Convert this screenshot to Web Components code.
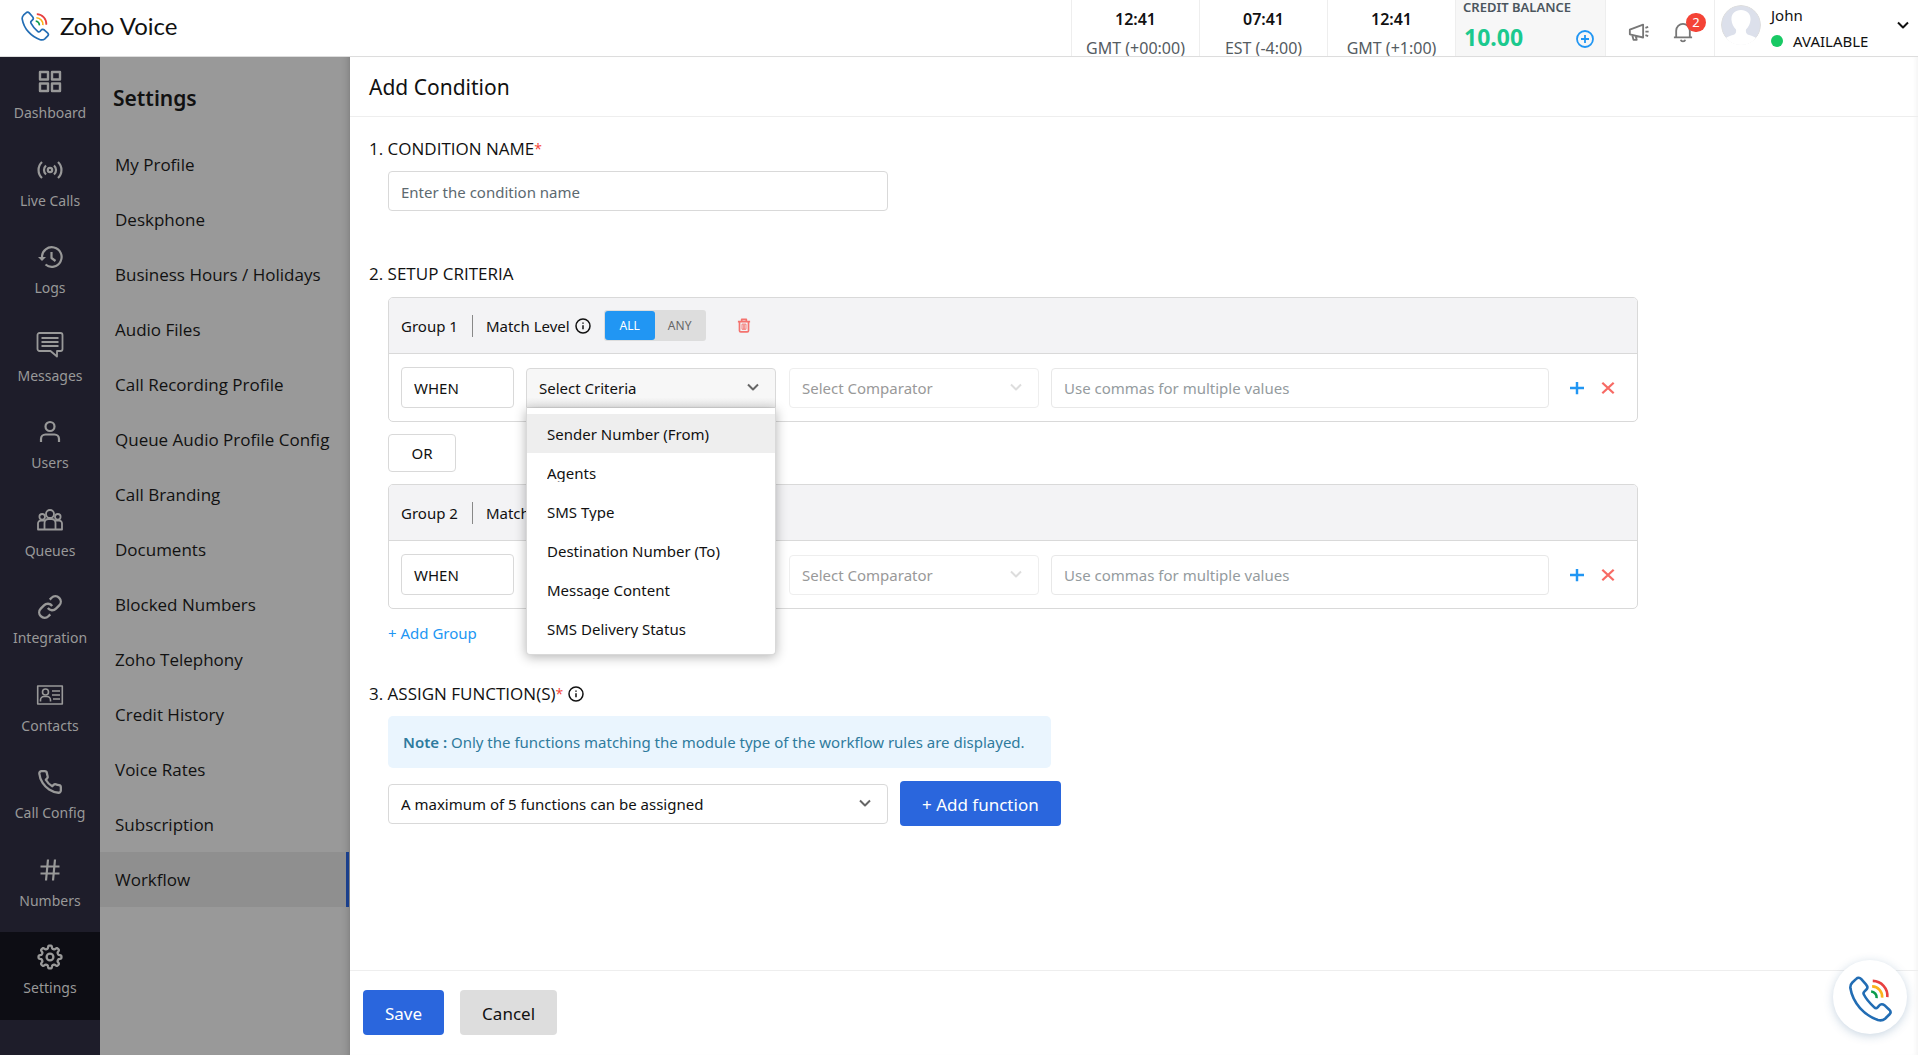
<!DOCTYPE html>
<html lang="en">
<head>
<meta charset="utf-8">
<title>Zoho Voice - Add Condition</title>
<style>
  html, body { height: 100%; margin: 0; }
  body { background: #fff; color: #111; font: 14px/20px "Noto Sans", "Open Sans", sans-serif; overflow: hidden; }
</style>
</head>
<body>
<zv-app></zv-app>
<script>
/* Base class: renders the static css/html of each element into an open shadow root. */
class ZvElement extends HTMLElement {
  connectedCallback() {
    if (this.shadowRoot) return;
    const t = document.createElement('template');
    t.innerHTML = `<style>*{box-sizing:border-box}${this.constructor.css || ''}</style>${this.render()}`;
    this.attachShadow({ mode: 'open' }).append(t.content.cloneNode(true));
  }
}

/* Outline of the gear: a circle whose radius swings between tooth and gap. */
const gear = (() => {
  let d = '';
  for (let i = 0; i < 160; i++) {
    const a = i / 160 * Math.PI * 2;
    const r = 10 + 1.5 * Math.tanh(2.2 * Math.cos(8 * a)) ;
    d += (i ? 'L' : 'M') + (13 + r * Math.sin(a)).toFixed(2) + ' ' + (13 - r * Math.cos(a)).toFixed(2);
  }
  return d + 'Z';
})();

const ICONS = {
  dashboard: ['0 0 26 26', 2.4, '<path d="M3 3h8v7.500H3zM15 3h8v7.500h-8zM3 14.500h8V22H3zM15 14.500h8V22h-8z"/>'],
  live: ['0 0 26 26', 2.2, '<circle cx="13" cy="13" r="2.200"/><path d="M9 17.500a6 6 0 0 1 0-9M17 17.500a6 6 0 0 0 0-9M5 21a11 11 0 0 1 0-16M21 21a11 11 0 0 0 0-16"/>'],
  logs: ['0 0 26 26', 2.2, '<path d="M5 13a9.800 9.800 0 1 1 3.500 7.500"/><path d="M1 13h8l-4 4z" fill="currentColor" stroke="none"/><path d="M14.500 8v6l4 3"/>'],
  messages: ['0 0 26 26', 1.8, '<path d="M2.500 1h21a2 2 0 0 1 2 2v14a2 2 0 0 1-2 2H20v5.500l-6.500-5.500h-11a2 2 0 0 1-2-2v-14a2 2 0 0 1 2-2z"/><path d="M4.500 6h17M4.500 10h17M4.500 14h17"/>'],
  users: ['0 0 26 26', 2.2, '<circle cx="13" cy="7.500" r="4.500"/><path d="M4 23v-3a4.500 4.500 0 0 1 4.500-4.500h9a4.500 4.500 0 0 1 4.500 4.500v3"/>'],
  queues: ['0 0 26 26', 1.8, '<circle cx="13" cy="7" r="4"/><circle cx="5.200" cy="9.800" r="2.800"/><circle cx="20.800" cy="9.800" r="2.800"/><path d="M7.500 22.500V16a4 4 0 0 1 4-4h3a4 4 0 0 1 4 4v6.500zM7.500 22.500H1v-6a3 3 0 0 1 3-3h3.500M18.500 22.500H25v-6a3 3 0 0 0-3-3h-3.500"/>'],
  integration: ['0 0 24 24', 2.2, '<path d="M10 13a5 5 0 0 0 7.540.540l3-3a5 5 0 0 0-7.070-7.070l-1.720 1.710M14 11a5 5 0 0 0-7.540-.540l-3 3a5 5 0 0 0 7.070 7.070l1.710-1.710"/>'],
  contacts: ['0 0 26 26', 1.6, '<path d="M.7 4h24.600v18H.7z"/><circle cx="8.500" cy="10" r="3"/><path d="M3.500 19.500V18a3.500 3.500 0 0 1 3.500-3.500h3a3.500 3.500 0 0 1 3.500 3.500v1.500M15 9h8M15 13h8M16 17h7"/>'],
  phone: ['0 0 24 24', 2.1, '<path d="M22 16.920v3a2 2 0 0 1-2.180 2 19.790 19.790 0 0 1-8.630-3.070 19.500 19.500 0 0 1-6-6A19.790 19.790 0 0 1 2.120 4.180 2 2 0 0 1 4.110 2h3a2 2 0 0 1 2 1.720c.127.960.361 1.903.7 2.810a2 2 0 0 1-.45 2.110L8.090 9.910a16 16 0 0 0 6 6l1.270-1.270a2 2 0 0 1 2.110-.45c.907.339 1.850.573 2.810.7A2 2 0 0 1 22 16.920z"/>'],
  hash: ['0 0 26 26', 2.2, '<path d="M3.500 9.500h19M3.500 16.500h19M11 2.500l-2 21M18 2.500l-2 21"/>'],
  gear: ['0 0 26 26', 2.3, `<path d="${gear}"/><circle cx="13" cy="13" r="3.400"/>`],
  chevron: ['0 0 14 14', 2, '<path d="M2 4.500l5 5 5-5"/>'],
  info: ['0 0 16 16', 1.5, '<circle cx="8" cy="8" r="7"/><path d="M8 7.200v4M8 4.500v1.300"/>'],
  trash: ['0 0 14 16', 1.8, '<path d="M.5 3.800h13M2.200 4v9.500a1.300 1.300 0 0 0 1.300 1.300h7a1.300 1.300 0 0 0 1.300-1.300V4M4.500 3.500v-2h5v2"/><path d="M4.900 6.500h4.200v5.500H4.900z" stroke-width="1"/><path d="M7 7v5" stroke-width="1.500"/>'],
  plus: ['0 0 16 16', 2.8, '<path d="M0 8h16M8 1v14"/>'],
  cross: ['0 0 16 16', 2.6, '<path d="M1.500 2l13 12M14.500 2l-13 12"/>'],
  circleplus: ['0 0 18 18', 1.8, '<circle cx="9" cy="9" r="8"/><path d="M5 9h8M9 5v8"/>'],
  megaphone: ['0 0 24 20', 2, '<path d="M2 7.500L16.500 2v14L2 12.500zM4.500 13l1.500 5.500h3.500L8.500 15M19 5.500l3-1M19 9.500h3.500M19 13.500l3 1"/>'],
  bell: ['0 0 22 22', 2, '<path d="M1 17h20M3.500 17V9.500a7.500 7.500 0 0 1 15 0V17M8.500 19.500a2.600 2.600 0 0 0 5 0"/>']
};

customElements.define('zv-icon', class extends ZvElement {
  static css = ':host{display:inline-flex;flex:none;width:24px;height:24px}svg{width:100%;height:100%;overflow:visible}';
  render() {
    const [box, w, body] = ICONS[this.getAttribute('name')];
    return `<svg viewBox="${box}" fill="none" stroke="currentColor" stroke-width="${w}" stroke-linejoin="round" aria-hidden="true">${body}</svg>`;
  }
});

customElements.define('zv-logo', class extends ZvElement {
  static css = ':host{display:inline-flex;flex:none;width:30px;height:30px}svg{width:100%;height:100%}';
  render() {
    return `<svg viewBox="0 0 135 142" fill="none" stroke-width="8" aria-hidden="true">
      <path stroke="#226db4" stroke-linejoin="round" d="M7 38C6 30 9 24 13 20L25 9C30 4 36 5 40 9L55 26C60 32 61 37 57 41L50 48C47 51 47 55 49 58C56 72 66 83 80 96C84 100 88 100 91 97L96 91C100 86 107 86 112 90L127 104C132 109 132 114 128 118L114 132C108 137 100 138 92 136C50 121 15 85 7 38Z"/>
      <path stroke="#e8403f" d="M76 15A46 46 0 0 1 121 65"/>
      <path stroke="#fbb31a" d="M74 32A32 32 0 0 1 105 67"/>
      <path stroke="#0a9b4b" d="M71 48A18 18 0 0 1 88 68"/></svg>`;
  }
});

customElements.define('zv-clock', class extends ZvElement {
  static css = `:host{display:flex;flex-direction:column;align-items:center;width:128px;height:57px;padding-top:9px;gap:9px;border-left:1px solid #eee;overflow:hidden}
    b{font-size:16px;line-height:20px;font-weight:600}
    span{font-size:16px;line-height:20px;color:#555c62}`;
  render() { return `<b>${this.getAttribute('time')}</b><span><slot></slot></span>`; }
});

customElements.define('zv-topbar', class extends ZvElement {
  static css = `:host{display:flex;height:57px;flex:none;background:#fff;border-bottom:1px solid #ddd;overflow:hidden}
    .brand{display:flex;align-items:center;gap:10px;padding:0 0 5px 20px;font:24px/30px Lato,sans-serif;color:#111;text-decoration:none}
    .fill{flex:1}
    .credit{width:151px;padding:0 11px 0 7px;background:#f7f7f7;border-left:1px solid #eee;border-right:1px solid #eee}
    .credit small{display:block;font-size:13px;line-height:14px;font-weight:600;color:#4b565e}
    .credit div{display:flex;align-items:center;justify-content:space-between;padding:10px 0 0 1px}
    .credit b{font-size:23px;line-height:26px;color:#1bc98e}
    button{appearance:none;border:0;background:none;padding:0;margin:0;display:flex;color:inherit;font:inherit}
    .credit zv-icon{width:18px;height:18px;margin-top:3px;color:#2196f3}
    .tools{display:flex;align-items:center;gap:22px;width:108px;padding:7px 0 0 22px;color:#777}
    .tools zv-icon{width:22px;height:20px}
    .bell{position:relative}
    .badge{position:absolute;left:14px;top:-9px;width:20px;height:19px;border-radius:10px;background:#f44336;color:#fff;font-size:13px;line-height:19px;text-align:center}
    .user{display:flex;width:204px;border-left:1px solid #eee;padding:5px 8px 0 6px}
    .user .pic{width:40px;height:40px;flex:none;border-radius:50%}
    .who{flex:1;padding-left:10px;font-size:15px;line-height:20px}
    .who .state{display:flex;align-items:center;gap:10px;padding-top:6px}
    .dot{width:12px;height:12px;border-radius:50%;background:#18c964}
    .user .more{height:40px;align-items:center}
    .more zv-icon{width:14px;height:14px}`;
  render() {
    return `<a class="brand" href="#"><zv-logo></zv-logo><span>Zoho Voice</span></a><div class="fill"></div>
      <zv-clock time="12:41">GMT (+00:00)</zv-clock><zv-clock time="07:41">EST (-4:00)</zv-clock><zv-clock time="12:41">GMT (+1:00)</zv-clock>
      <div class="credit"><small>CREDIT BALANCE</small><div><b>10.00</b><button aria-label="Add credit"><zv-icon name="circleplus"></zv-icon></button></div></div>
      <div class="tools"><button aria-label="Announcements"><zv-icon name="megaphone"></zv-icon></button><button class="bell" aria-label="Notifications"><zv-icon name="bell"></zv-icon><span class="badge">2</span></button></div>
      <div class="user">
        <svg class="pic" viewBox="0 0 40 40" aria-hidden="true"><circle cx="20" cy="20" r="19.500" fill="#dce0eb" stroke="#ddd"/><path fill="#fff" d="M20 5c6 0 10 4 9.500 10-.3 4-2 7-4.500 9.500-.5 3 .5 4.500 3 5.500 2.500.8 5 1.500 7 3A19 19 0 0 1 5 33c2-1.500 4.500-2.200 7-3 2.500-1 3.500-2.500 3-5.500-2.500-2.500-4.200-5.500-4.500-9.500C10 9 14 5 20 5z"/></svg>
        <div class="who"><div>John</div><div class="state"><span class="dot"></span>AVAILABLE</div></div>
        <button class="more" aria-label="Account menu"><zv-icon name="chevron"></zv-icon></button>
      </div>`;
  }
});

customElements.define('zv-rail-item', class extends ZvElement {
  static css = `:host{display:block;flex:1;color:#999}
    :host([active]){background:#0d0d14}
    a{display:flex;flex-direction:column;align-items:center;gap:8px;height:100%;padding-top:12px;color:inherit;text-decoration:none;font-size:14px;line-height:20px}
    zv-icon{width:26px;height:26px}`;
  render() { return `<a href="#"><zv-icon name="${this.getAttribute('icon')}"></zv-icon><span><slot></slot></span></a>`; }
});

customElements.define('zv-rail', class extends ZvElement {
  static css = ':host{display:block;width:100px;flex:none;background:#1e1d2a}nav{display:flex;flex-direction:column;height:100%;padding-bottom:35px}';
  render() {
    const items = [['dashboard','Dashboard'],['live','Live Calls'],['logs','Logs'],['messages','Messages'],['users','Users'],['queues','Queues'],['integration','Integration'],['contacts','Contacts'],['phone','Call Config'],['hash','Numbers'],['gear','Settings']];
    return `<nav aria-label="Main">${items.map(([i, n]) => `<zv-rail-item icon="${i}"${n === 'Settings' ? ' active' : ''}>${n}</zv-rail-item>`).join('')}</nav>`;
  }
});

customElements.define('zv-settings-menu', class extends ZvElement {
  static css = `:host{display:block;width:250px;flex:none;background:#999;box-shadow:inset -8px 0 8px -8px rgba(0,0,0,.25)}
    h2{margin:0;padding:26px 13px 24px;font-size:21px;line-height:30px;font-weight:600;color:#111}
    nav{display:flex;flex-direction:column}
    a{height:55px;padding:0 15px;margin-right:1px;font-family:"Open Sans",sans-serif;line-height:56px;font-size:17px;color:#111;text-decoration:none;white-space:nowrap}
    a[aria-current]{background:#8f8f8f;border-right:3px solid #1a3f8c}`;
  render() {
    const items = ['My Profile','Deskphone','Business Hours / Holidays','Audio Files','Call Recording Profile','Queue Audio Profile Config','Call Branding','Documents','Blocked Numbers','Zoho Telephony','Credit History','Voice Rates','Subscription','Workflow'];
    return `<h2>Settings</h2><nav aria-label="Settings">${items.map(n => `<a href="#"${n === 'Workflow' ? ' aria-current="page"' : ''}>${n}</a>`).join('')}</nav>`;
  }
});

customElements.define('zv-select', class extends ZvElement {
  static css = `:host{display:block;position:relative;width:250px}
    select{appearance:none;display:block;width:100%;height:40px;margin:0;padding:0 40px 0 12px;border:1px solid #d9d9d9;border-radius:4px;background:#fff;color:#111;font:inherit;font-size:15px}
    :host([open]) select{background:linear-gradient(#f7f7f7 75%,#ececec);border-radius:4px 4px 0 0}
    zv-icon{position:absolute;right:16px;top:12px;width:14px;height:14px;color:#666;pointer-events:none}
    :host([disabled]) select{opacity:1;color:#999;border-color:#eee}
    :host([disabled]) zv-icon{color:#ddd}`;
  render() {
    const t = this.getAttribute('text');
    return `<select aria-label="${t}"${this.hasAttribute('disabled') ? ' disabled' : ''}><option>${t}</option></select><zv-icon name="chevron"></zv-icon><slot></slot>`;
  }
});

customElements.define('zv-options', class extends ZvElement {
  static css = `:host{display:block;position:absolute;z-index:5;left:0;right:0;top:40px;background:#fff;border:1px solid #d9d9d9;border-top:0;border-radius:0 0 4px 4px;box-shadow:0 2px 12px rgba(0,0,0,.3)}
    ul{list-style:none;margin:0;padding:6px 0}
    li{height:39px;padding:10px 20px 0;font-size:15px}
    li[aria-selected=true]{background:#eee}
    span{display:block;line-height:20px;height:19px;overflow:hidden;white-space:nowrap}`;
  render() {
    return `<ul role="listbox" aria-label="Criteria">${['Sender Number (From)','Agents','SMS Type','Destination Number (To)','Message Content','SMS Delivery Status'].map((n, i) => `<li role="option" aria-selected="${!i}"><span>${n}</span></li>`).join('')}</ul>`;
  }
});

customElements.define('zv-group', class extends ZvElement {
  static css = `:host{display:block;border:1px solid #d9d9d9;border-radius:5px;background:#fff}
    header{display:flex;align-items:center;height:56px;padding:0 12px;background:#f3f3f5;border-bottom:1px solid #d9d9d9;border-radius:4px 4px 0 0;font-size:15px}
    .bar{width:1px;height:22px;margin:0 13px 0 14px;background:#888}
    .info{width:16px;height:16px;margin:0 13px 0 5px}
    button{appearance:none;border:0;background:none;margin:0;padding:0;display:flex;align-items:center;justify-content:center;font:inherit}
    .toggle{display:flex;width:102px;height:31px;padding:1px;border-radius:3px;background:#ddd}
    .toggle button{flex:1;font-size:12px;color:#666}
    .toggle .on{background:#2196f3;color:#fff;border-radius:3px}
    .del{margin-left:31px;color:#f4736f}
    .del zv-icon{width:14px;height:15px}
    .row{display:flex;align-items:center;gap:12px;padding:13px 88px 13px 12px}
    .when{width:113px;height:41px;flex:none;padding-left:12px;border:1px solid #d9d9d9;border-radius:4px;line-height:40px;font-size:15px}
    zv-select{flex:none}
    zv-select[disabled]{margin-left:1px}
    input{flex:1;min-width:0;height:40px;margin:0;padding:0 12px;border:1px solid #e8e8e8;border-radius:4px;background:#fff;font:inherit;font-size:15px}
    input::placeholder{color:#949b9e;opacity:1}
    .acts{display:flex;gap:16px;width:46px;margin-right:-66px;margin-left:8px}
    .acts zv-icon{width:14px;height:14px}
    .acts button{width:15px}
    .add{color:#2196f3}.rem{color:#f76a64}`;
  render() {
    const open = this.hasAttribute('open');
    return `<header><span>${this.getAttribute('name')}</span><span class="bar"></span><span>Match Level</span><zv-icon class="info" name="info"></zv-icon>
        <div class="toggle"><button class="on">ALL</button><button>ANY</button></div>
        ${open ? '<button class="del" aria-label="Delete group"><zv-icon name="trash"></zv-icon></button>' : ''}</header>
      <div class="row"><div class="when">WHEN</div>
        <zv-select text="Select Criteria"${open ? ' open' : ''}>${open ? '<zv-options></zv-options>' : ''}</zv-select>
        <zv-select text="Select Comparator" disabled></zv-select>
        <input type="text" aria-label="Values" placeholder="Use commas for multiple values" disabled>
        <div class="acts"><button class="add" aria-label="Add row"><zv-icon name="plus"></zv-icon></button><button class="rem" aria-label="Remove row"><zv-icon name="cross"></zv-icon></button></div></div>`;
  }
});

customElements.define('zv-button', class extends ZvElement {
  static css = `:host{display:block}
    button{appearance:none;display:block;height:45px;margin:0;padding:0 22px;border:0;border-radius:4px;background:#2a66dd;color:#fff;font:inherit;font-size:17px;line-height:47px;white-space:nowrap}
    :host([plain]) button{background:#ddd;color:#111}`;
  render() { return '<button type="button"><slot></slot></button>'; }
});

customElements.define('zv-condition-form', class extends ZvElement {
  static css = `:host{display:flex;flex-direction:column;flex:1;min-width:0;background:#fff;box-shadow:inset -4px 0 4px -2px #f4f4f4}
    h1{margin:0;padding:15px 19px 14px;font-size:21px;line-height:30px;font-weight:400;border-bottom:1px solid #eee}
    form{flex:1;padding:20px 19px 0}
    h3{display:flex;align-items:center;margin:0;font-family:"Open Sans",sans-serif;font-size:17px;line-height:24px;font-weight:400}
    i{font-style:normal;font-size:14px;color:#f44336}
    section{padding-left:19px}
    #cname{display:block;width:500px;height:40px;margin:10px 0 51px;padding:2px 12px 0;border:1px solid #d9d9d9;border-radius:4px;font:inherit;font-size:15px}
    #cname::placeholder{color:#5c6970;opacity:1}
    .criteria{max-width:1269px;margin-top:11px}
    .or{width:68px;height:38px;margin:12px 0;border:1px solid #d9d9d9;border-radius:4px;text-align:center;font-size:15px;line-height:37px}
    .link{display:inline-block;margin-top:14px;color:#2196f3;text-decoration:none;font-size:15px;line-height:20px}
    .assign{margin-top:38px}
    .assign zv-icon{width:16px;height:16px;margin-left:5px}
    .note{width:fit-content;min-width:663px;margin:10px 0 13px;padding:16px 15px;border-radius:5px;background:#eaf5fe;color:#2f7b9d;font-size:15px;line-height:20px}
    .note b{font-weight:600}
    .pick{display:flex;align-items:center;gap:12px}
    .pick zv-select{width:500px}
    footer{display:flex;gap:16px;padding:19px 13px 20px;border-top:1px solid #eee}`;
  render() {
    return `<h1>Add Condition</h1>
      <form>
        <h3><label for="cname">1. CONDITION NAME</label><i>*</i></h3>
        <section><input id="cname" type="text" placeholder="Enter the condition name"></section>
        <h3>2. SETUP CRITERIA</h3>
        <section class="criteria"><zv-group name="Group 1" open></zv-group><div class="or">OR</div><zv-group name="Group 2"></zv-group><a class="link" href="#">+ Add Group</a></section>
        <h3 class="assign">3. ASSIGN FUNCTION(S)<i>*</i><zv-icon name="info"></zv-icon></h3>
        <section><div class="note"><b>Note :</b> Only the functions matching the module type of the workflow rules are displayed.</div>
          <div class="pick"><zv-select text="A maximum of 5 functions can be assigned"></zv-select><zv-button>+ Add function</zv-button></div></section>
      </form>
      <footer><zv-button>Save</zv-button><zv-button plain>Cancel</zv-button></footer>`;
  }
});

customElements.define('zv-call-bubble', class extends ZvElement {
  static css = `:host{position:absolute;right:11px;bottom:21px}
    button{appearance:none;display:flex;align-items:center;justify-content:center;width:74px;height:74px;padding:0;border:0;border-radius:50%;background:#fff;box-shadow:0 2px 10px rgba(40,90,140,.25)}
    zv-logo{width:44px;height:46px;margin-top:3px}`;
  render() { return '<button aria-label="Open dialer"><zv-logo></zv-logo></button>'; }
});

customElements.define('zv-app', class extends ZvElement {
  static css = ':host{display:flex;flex-direction:column;height:100vh;position:relative}.body{display:flex;flex:1;min-height:0}';
  render() {
    return '<zv-topbar></zv-topbar><div class="body"><zv-rail></zv-rail><zv-settings-menu></zv-settings-menu><zv-condition-form></zv-condition-form></div><zv-call-bubble></zv-call-bubble>';
  }
});
</script>
</body>
</html>
